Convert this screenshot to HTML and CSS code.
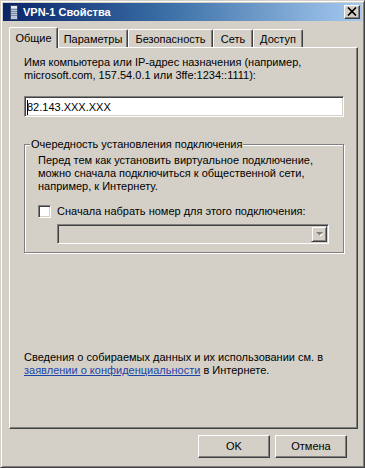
FILE: index.html
```html
<!DOCTYPE html>
<html lang="ru">
<head>
<meta charset="utf-8">
<title>VPN-1 Свойства</title>
<link rel="stylesheet" href="styles.css">
</head>
<body>
<div class="window">
  <div class="titlebar">
    <svg class="app-icon" width="16" height="16" viewBox="0 0 16 16">
      <rect x="5.5" y="1.5" width="7" height="14" fill="#b8c4d8" stroke="#3a4660"/>
      <rect x="6" y="2" width="6" height="2" fill="#e8eef8"/>
      <line x1="6" y1="5.5" x2="12" y2="5.5" stroke="#7888a8"/>
      <line x1="6" y1="7.5" x2="12" y2="7.5" stroke="#7888a8"/>
      <line x1="6" y1="9.5" x2="12" y2="9.5" stroke="#7888a8"/>
      <line x1="6" y1="11.5" x2="12" y2="11.5" stroke="#7888a8"/>
    </svg>
    <span class="title">VPN-1 Свойства</span>
    <div class="close">
      <svg width="10" height="9" viewBox="0 0 10 9">
        <path d="M1 0.5 L9 8.5 M9 0.5 L1 8.5" stroke="#000" stroke-width="1.7" fill="none"/>
      </svg>
    </div>
  </div>

  <div class="tabs">
    <div class="tab active tab-general">Общие</div>
    <div class="tab tab-params">Параметры</div>
    <div class="tab tab-security">Безопасность</div>
    <div class="tab tab-network">Сеть</div>
    <div class="tab tab-access">Доступ</div>
  </div>

  <div class="panel">
    <p class="text">Имя компьютера или IP-адрес назначения (например,<br>microsoft.com, 157.54.0.1 или 3ffe:1234::1111):</p>
    <div class="input"><span class="caret"></span>82.143.XXX.XXX</div>

    <fieldset class="group">
      <legend>Очередность установления подключения</legend>
      <div class="group-body">
        <p class="text para">Перед тем как установить виртуальное подключение,<br>можно сначала подключиться к общественной сети,<br>например, к Интернету.</p>
        <div class="check-row">
          <span class="checkbox"></span>
          <span>Сначала набрать номер для этого подключения:</span>
        </div>
        <div class="combo">
          <div class="combo-btn">
            <svg width="7" height="5" viewBox="0 0 7 5">
              <path d="M1 1 H6 L3.5 3.5 Z" fill="#ffffff" transform="translate(1,1)"/>
              <path d="M0 0 H7 L3.5 3.5 Z" fill="#808080"/>
            </svg>
          </div>
        </div>
      </div>
    </fieldset>

    <p class="text privacy">Сведения о собираемых данных и их использовании см. в<br><a class="link" href="#">заявлении о конфиденциальности</a> в Интернете.</p>
  </div>

  <div class="buttons">
    <div class="btn">OK</div>
    <div class="btn">Отмена</div>
  </div>
</div>
</body>
</html>
```

FILE: styles.css
```css
html, body {
  margin: 0;
  padding: 0;
  background: #d4d0c8;
}

body {
  font-family: "Liberation Sans", Arial, sans-serif;
  font-size: 11px;
  color: #000;
}

.window {
  width: 365px;
  height: 468px;
  box-sizing: border-box;
  background: #d4d0c8;
  border: 1px solid;
  border-color: #d4d0c8 #404040 #404040 #d4d0c8;
  box-shadow: inset 1px 1px 0 #ffffff, inset -1px -1px 0 #808080;
  padding: 2px;
  display: flex;
  flex-direction: column;
}

/* Title bar */
.titlebar {
  height: 18px;
  flex: none;
  display: flex;
  align-items: center;
  padding: 0 2px;
  background: linear-gradient(to right, #0a246a 0%, #3a6ea5 45%, #a6caf0 100%);
}

.app-icon {
  flex: none;
  margin-right: 2px;
}

.title {
  flex: 1;
  color: #ffffff;
  font-weight: bold;
  font-size: 11px;
  line-height: 13px;
  padding-top: 1px;
}

.close {
  width: 16px;
  height: 14px;
  box-sizing: border-box;
  background: #d4d0c8;
  border: 1px solid;
  border-color: #ffffff #404040 #404040 #ffffff;
  box-shadow: inset -1px -1px 0 #808080;
  display: flex;
  align-items: center;
  justify-content: center;
  padding-bottom: 1px;
}

/* Tabs */
.tabs {
  flex: none;
  display: flex;
  align-items: flex-end;
  height: 20px;
  margin: 6px 4px 0 6px;
}

.tab {
  box-sizing: border-box;
  height: 18px;
  border-top: 1px solid #ffffff;
  border-left: 1px solid #ffffff;
  border-right: 1px solid #404040;
  border-radius: 2px 2px 0 0;
  box-shadow: inset -1px 0 0 #808080;
  background: #d4d0c8;
  text-align: center;
  line-height: 14px;
  padding-top: 2px;
}

.tab.active {
  height: 21px;
  margin-bottom: -1px;
  position: relative;
  z-index: 1;
  padding-top: 3px;
}

.tab-general { width: 49px; }
.tab-params { width: 70px; }
.tab-security { width: 85px; }
.tab-network { width: 40px; }
.tab-access { width: 50px; }

/* Panel */
.panel {
  flex: 1;
  display: flex;
  flex-direction: column;
  margin: 0 4px 0 6px;
  border: 1px solid;
  border-color: #ffffff #404040 #404040 #ffffff;
  box-shadow: inset -1px -1px 0 #808080;
  padding: 8px 13px 51px 14px;
}

.text {
  margin: 0;
  line-height: 13px;
}

.input {
  margin-top: 14px;
  height: 21px;
  box-sizing: border-box;
  background: #ffffff;
  border: 1px solid;
  border-color: #808080 #ffffff #ffffff #808080;
  box-shadow: inset 1px 1px 0 #404040, inset -1px -1px 0 #d4d0c8;
  padding: 3px 2px 0 2px;
  line-height: 13px;
  white-space: nowrap;
}

.caret {
  display: inline-block;
  width: 1px;
  height: 15px;
  margin-right: -1px;
  vertical-align: -4px;
  background: #000;
}

/* Group box */
.group {
  margin: 21px 0 0 0;
  padding: 0 13px 8px 5px;
  min-width: 0;
  border: 1px solid #808080;
  box-shadow: inset 1px 1px 0 #ffffff, 1px 1px 0 #ffffff;
}

.group legend {
  padding: 0 1px;
  line-height: 13px;
  background: #d4d0c8;
}

.group-body {
  padding-left: 8px;
}

.para {
  margin-top: 3px;
}

.check-row {
  margin-top: 12px;
  display: flex;
  align-items: center;
  height: 13px;
  line-height: 13px;
}

.checkbox {
  flex: none;
  width: 13px;
  height: 13px;
  box-sizing: border-box;
  background: #ffffff;
  border: 1px solid;
  border-color: #808080 #ffffff #ffffff #808080;
  box-shadow: inset 1px 1px 0 #404040, inset -1px -1px 0 #d4d0c8;
  margin-right: 6px;
}

.combo {
  margin: 6px 0 0 19px;
  width: 272px;
  height: 20px;
  box-sizing: border-box;
  background: #d4d0c8;
  border: 1px solid;
  border-color: #808080 #ffffff #ffffff #808080;
  box-shadow: inset 1px 1px 0 #404040, inset -1px -1px 0 #d4d0c8;
  padding: 1px;
  display: flex;
  justify-content: flex-end;
}

.combo-btn {
  width: 16px;
  height: 16px;
  box-sizing: border-box;
  background: #d4d0c8;
  border: 1px solid;
  border-color: #d4d0c8 #404040 #404040 #d4d0c8;
  box-shadow: inset 1px 1px 0 #ffffff, inset -1px -1px 0 #808080;
  display: flex;
  align-items: center;
  justify-content: center;
}

/* Privacy note */
.privacy {
  margin-top: auto;
}

.link {
  color: #1c44a8;
  text-decoration: underline;
}

/* Buttons */
.buttons {
  flex: none;
  display: flex;
  justify-content: flex-end;
  gap: 5px;
  margin: 6px 15px 7px 0;
}

.btn {
  width: 72px;
  height: 23px;
  box-sizing: border-box;
  background: #d4d0c8;
  border: 1px solid;
  border-color: #ffffff #404040 #404040 #ffffff;
  box-shadow: inset -1px -1px 0 #808080;
  text-align: center;
  line-height: 20px;
}
```
